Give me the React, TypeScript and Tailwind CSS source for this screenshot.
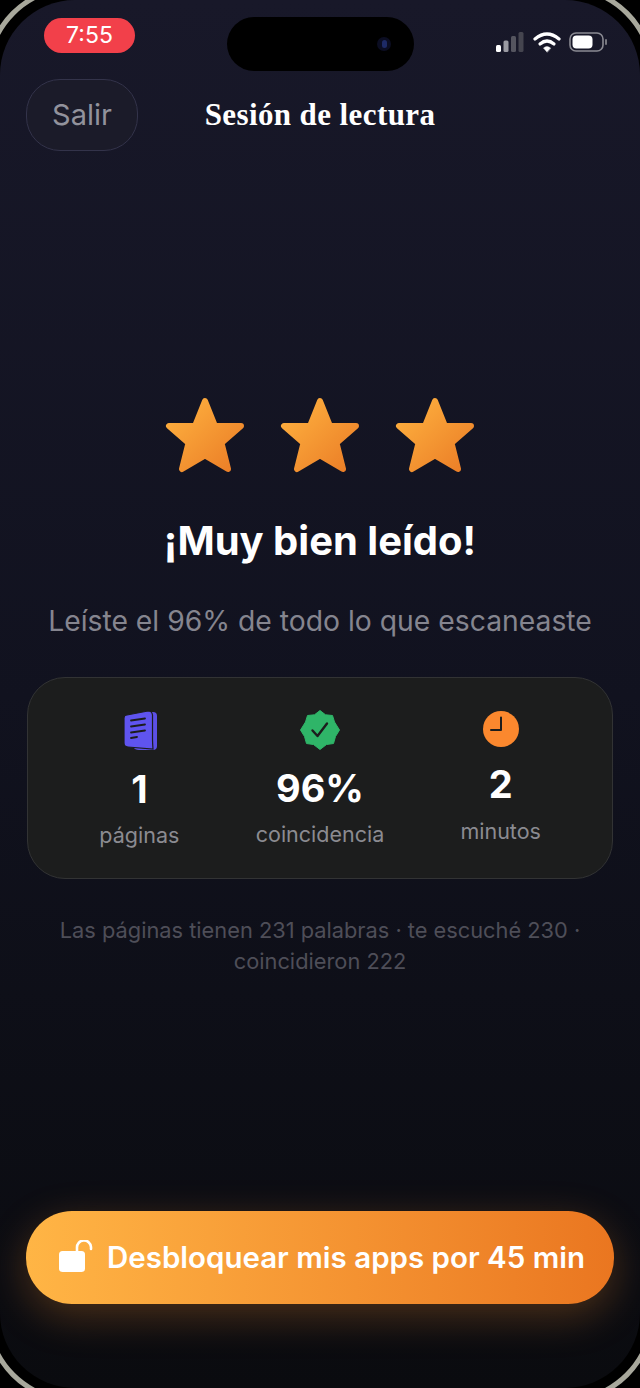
import React from "react";

const Star = () => (
  <svg width="80" height="76" viewBox="0 0 80 76" className="block">
    <defs>
      <linearGradient id="sg" x1="0" y1="0" x2="1" y2="1">
        <stop offset="0" stopColor="#ffb340" />
        <stop offset="1" stopColor="#ea7c26" />
      </linearGradient>
    </defs>
    <path
      d="M40 4 L50 29 L76 29 L56.5 46 L63 72 L40 58.5 L17 72 L23.5 46 L4 29 L30 29 Z"
      fill="url(#sg)"
      stroke="url(#sg)"
      strokeWidth="6"
      strokeLinejoin="round"
    />
  </svg>
);

const PagesIcon = () => (
  <svg width="36" height="42" viewBox="0 0 36 42" className="block">
    <path d="M12 6 L32 3 Q36 3 36 7 V37 Q36 41 32 41 H18 Q14 41 12 38 Z" fill="#5c50e6" />
    <path d="M6 6 L27 2 Q31 2 31.5 6 V30 Q31.5 34 32 40 L7 38 Q3 38 3 34 V9 Q3 6 6 6 Z" fill="#5f54ef" stroke="#1c1d1d" strokeWidth="1.2" />
    <g stroke="#1c1d1d" strokeWidth="1.8" strokeLinecap="round">
      <path d="M10 11.5 L24 9.5" />
      <path d="M10 17.5 L24 15.5" />
      <path d="M10 23.5 L24 21.5" />
      <path d="M10 29 L16 28" />
    </g>
  </svg>
);

const BadgeIcon = () => (
  <svg width="40" height="40" viewBox="0 0 40 40" className="block">
    <path
      d="M20 0.5 L25.5 4.8 L32.5 5.5 L34.5 12 L39.5 20 L35.5 26.5 L33.5 33.5 L26.5 34.5 L20 39.5 L13.5 34.5 L6.5 33.5 L4.5 26.5 L0.5 20 L5.5 12 L7.5 5.5 L14.5 4.8 Z"
      fill="#2fb568"
      stroke="#2fb568"
      strokeWidth="1"
      strokeLinejoin="round"
    />
    <path d="M12.5 20.5 L17.5 26 L27 13.5" fill="none" stroke="#1c1d1d" strokeWidth="2.4" strokeLinecap="round" strokeLinejoin="round" />
  </svg>
);

const ClockIcon = () => (
  <svg width="36" height="36" viewBox="0 0 36 36" className="block">
    <circle cx="18" cy="18" r="18" fill="#fb882e" />
    <path d="M18 6.5 V19 H8" fill="none" stroke="#1c1d1d" strokeWidth="2" strokeLinecap="round" strokeLinejoin="round" />
  </svg>
);

const Stat = ({ icon, value, label, iconH, gap1, gap2 }: { icon: React.ReactNode; value: string; label: string; iconH: string; gap1: string; gap2: string }) => (
  <div className="flex flex-col items-center">
    <div className={`flex items-center justify-center ${iconH}`}>{icon}</div>
    <div className={`text-[38px] leading-[44px] font-bold text-white ${gap1}`}>{value}</div>
    <div className={`text-[21.5px] leading-[26px] text-[#8b8b91] ${gap2}`}>{label}</div>
  </div>
);

export default function App() {
  return (
    <div className="relative w-[640px] h-[1388px] overflow-hidden bg-black font-['Inter',sans-serif]">
      <div className="absolute left-[-15px] top-[-15px] w-[670px] h-[1418px] rounded-[90px] border-[5px] border-[#a8a89c]" />
      <div className="relative w-[640px] h-[1388px] rounded-[75px] bg-gradient-to-b from-[#181829] via-[#11121f] to-[#0a0b0f] flex flex-col">
        {/* status bar */}
        <div className="flex items-start justify-between pt-[18px] pl-[44px] pr-[31px] h-[70px] shrink-0">
          <div className="w-[91px] h-[35px] rounded-full bg-[#f2404a] text-white text-[23px] leading-[35px] text-center">7:55</div>
          <div className="flex items-center gap-[8px] mt-[6px] h-[35px]">
            <svg width="30" height="22" viewBox="0 0 30 22">
              <rect x="1" y="14" width="5" height="7" rx="1.5" fill="#fff" />
              <rect x="8.5" y="9.5" width="5" height="11.5" rx="1.5" fill="#9a9aa2" />
              <rect x="16" y="5" width="5" height="16" rx="1.5" fill="#55555f" />
              <rect x="23.5" y="1" width="5" height="20" rx="1.5" fill="#45454f" />
            </svg>
            <svg width="28" height="22" viewBox="0 0 28 22" fill="none" stroke="#fff" strokeWidth="3.2" strokeLinecap="round">
              <path d="M2 8 Q14 -2 26 8" />
              <path d="M7 13 Q14 7 21 13" />
              <path d="M14 21 L10.5 17 Q14 14 17.5 17 Z" fill="#fff" strokeWidth="0.5" />
            </svg>
            <svg width="40" height="22" viewBox="0 0 40 22">
              <rect x="1" y="2" width="33" height="18" rx="6" fill="none" stroke="#8a8a92" strokeWidth="1.6" />
              <rect x="3.5" y="4.5" width="20" height="13" rx="4" fill="#fff" />
              <rect x="36" y="8" width="2" height="6" rx="1" fill="#77777f" />
            </svg>
          </div>
        </div>
        {/* header */}
        <div className="relative flex items-center justify-center h-[72px] mt-[9px] shrink-0">
          <div className="absolute left-[26px] top-0 w-[112px] h-[72px] rounded-[34px] border border-[#33334a] bg-[#1b1b29] flex items-center justify-center text-[29px] text-[#92929c]">Salir</div>
          <div className="font-['Liberation_Serif',serif] font-bold text-[31px] tracking-[0.4px] text-white">Sesión de lectura</div>
        </div>
        {/* stars */}
        <div className="flex justify-center gap-[35px] mt-[246px]">
          <Star />
          <Star />
          <Star />
        </div>
        <div className="text-center text-[40px] leading-[44px] font-bold text-white mt-[46px]">¡Muy bien leído!</div>
        <div className="text-center text-[28.3px] leading-[36px] text-[#85858f] mt-[40px]">Leíste el 96% de todo lo que escaneaste</div>
        {/* card */}
        <div className="mx-[27px] mt-[38px] h-[202px] rounded-[38px] border border-[#323334] bg-[#1c1d1d] grid grid-cols-3 px-[21px] pt-[31px]">
          <Stat icon={<PagesIcon />} value="1" label="páginas" iconH="h-[42px]" gap1="mt-[16px]" gap2="mt-[11px]" />
          <Stat icon={<BadgeIcon />} value="96%" label="coincidencia" iconH="h-[42px]" gap1="mt-[15px]" gap2="mt-[11px]" />
          <Stat icon={<ClockIcon />} value="2" label="minutos" iconH="h-[38px] mt-[1px]" gap1="mt-[14px]" gap2="mt-[12px]" />
        </div>
        <div className="mt-[36px] px-[50px] text-center text-[21.8px] leading-[31px] text-[#4e4e58]">
          Las páginas tienen 231 palabras · te escuché 230 · coincidieron 222
        </div>
        {/* button */}
        <div className="mt-[234px] mx-[26px] h-[93px] pl-[4px] rounded-[46px] bg-gradient-to-r from-[#ffb545] to-[#ea7620] shadow-[0_12px_40px_rgba(245,140,45,0.28)] flex items-center justify-center gap-[14px]">
          <svg width="34" height="32" viewBox="0 0 34 32" className="mt-[-3px]">
            <rect x="0" y="11" width="26" height="21" rx="3.5" fill="#fff" />
            <path d="M18 12 V8 A7 7 0 0 1 32 7 V9" fill="none" stroke="#fff" strokeWidth="2.6" strokeLinecap="round" />
          </svg>
          <span className="text-[29.5px] font-semibold text-white">Desbloquear mis apps por 45 min</span>
        </div>
      </div>
      {/* dynamic island */}
      <div className="absolute left-[227px] top-[17px] w-[187px] h-[54px] rounded-full bg-black">
        <div className="absolute left-[150px] top-[20px] w-[14px] h-[14px] rounded-full bg-[#0b0d22] flex items-center justify-center">
          <div className="w-[5px] h-[8px] rounded-full bg-[#1d2a66]" />
        </div>
      </div>
    </div>
  );
}
